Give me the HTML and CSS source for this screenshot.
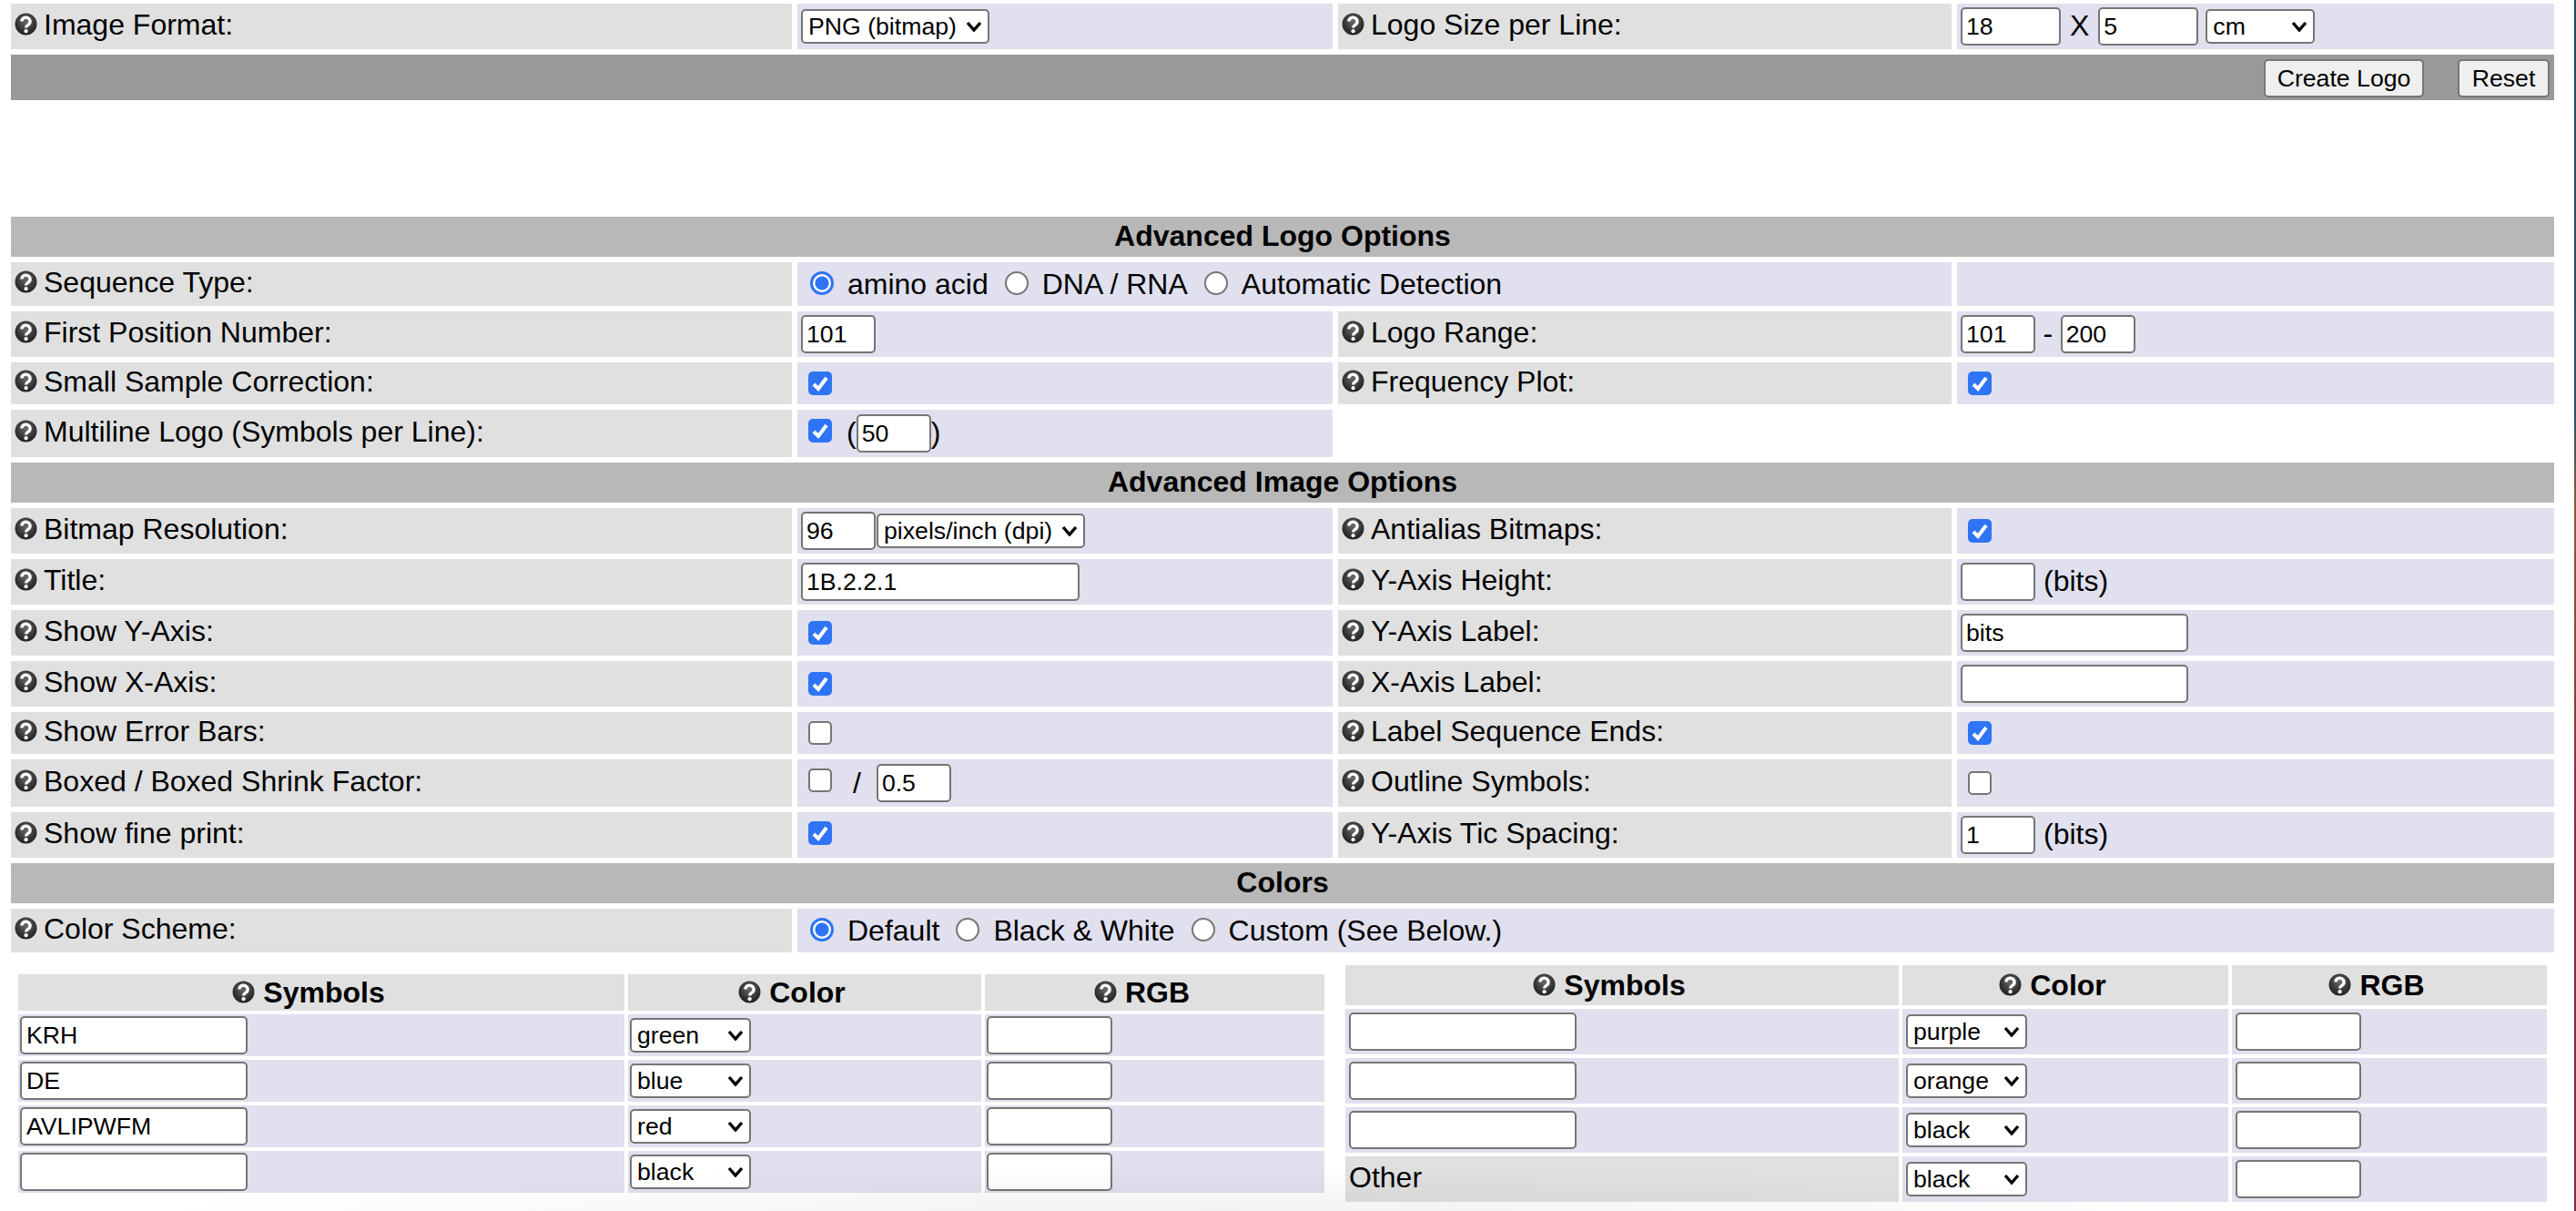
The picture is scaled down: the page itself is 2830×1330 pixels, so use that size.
FILE: index.html
```html
<!DOCTYPE html>
<html lang="en">
<head>
    <meta charset="UTF-8">
    <title>Logo Options</title>
    <link rel="stylesheet" href="styles.css">
</head>
<body>

<svg class="defs" width="0" height="0">
    <defs>
        <radialGradient id="helpFill" cx="50%" cy="38%" r="62%">
            <stop offset="0" stop-color="#6a6a6a"/>
            <stop offset="0.7" stop-color="#333"/>
            <stop offset="1" stop-color="#222"/>
        </radialGradient>
        <symbol id="help" viewBox="0 0 24 24">
            <circle cx="12" cy="12" r="11.5" fill="url(#helpFill)"/>
            <path d="M7.6 9.2a4.4 4.2 0 1 1 6.9 3.4c-1.6 1-2.4 1.6-2.4 3.2" fill="none" stroke="#fff" stroke-width="3.2"/>
            <circle cx="12.1" cy="19.4" r="2" fill="#fff"/>
        </symbol>
    </defs>
</svg>

<div class="page">
    <form class="options">
        <div class="lbl"><svg class="help"><use href="#help"/></svg>Image Format:</div>
        <div class="val">
            <select class="sel-png"><option>PNG (bitmap)</option><option>EPS (vector)</option></select>
        </div>
        <div class="lbl"><svg class="help"><use href="#help"/></svg>Logo Size per Line:</div>
        <div class="val">
            <input class="w-size" type="text" value="18">
            <span class="times">X</span>
            <input class="w-size" type="text" value="5">
            <select class="sel-cm"><option>cm</option><option>inches</option></select>
        </div>

        <div class="bar">
            <button type="button" class="btn-create">Create Logo</button>
            <button type="reset" class="btn-reset">Reset</button>
        </div>

        <div class="spacer"></div>

        <div class="head">Advanced Logo Options</div>

        <div class="lbl"><svg class="help"><use href="#help"/></svg>Sequence Type:</div>
        <div class="val span-2">
            <input type="radio" name="seqtype" checked><span class="opt">amino acid</span>
            <input type="radio" name="seqtype"><span class="opt">DNA / RNA</span>
            <input type="radio" name="seqtype"><span class="opt">Automatic Detection</span>
        </div>
        <div class="val"></div>

        <div class="lbl"><svg class="help"><use href="#help"/></svg>First Position Number:</div>
        <div class="val"><input class="w-num" type="text" value="101"></div>
        <div class="lbl"><svg class="help"><use href="#help"/></svg>Logo Range:</div>
        <div class="val">
            <input class="w-num" type="text" value="101">
            <span class="dash">-</span>
            <input class="w-num" type="text" value="200">
        </div>

        <div class="lbl"><svg class="help"><use href="#help"/></svg>Small Sample Correction:</div>
        <div class="val"><input type="checkbox" checked></div>
        <div class="lbl"><svg class="help"><use href="#help"/></svg>Frequency Plot:</div>
        <div class="val"><input type="checkbox" checked></div>

        <div class="lbl"><svg class="help"><use href="#help"/></svg>Multiline Logo (Symbols per Line):</div>
        <div class="val">
            <input class="raised" type="checkbox" checked>
            <span class="paren">(</span><input class="w-num" type="text" value="50"><span class="paren-end">)</span>
        </div>
        <div class="blank"></div>

        <div class="head">Advanced Image Options</div>

        <div class="lbl"><svg class="help"><use href="#help"/></svg>Bitmap Resolution:</div>
        <div class="val">
            <input class="w-num" type="text" value="96">
            <select class="sel-dpi"><option>pixels/inch (dpi)</option><option>pixels/cm</option></select>
        </div>
        <div class="lbl"><svg class="help"><use href="#help"/></svg>Antialias Bitmaps:</div>
        <div class="val"><input type="checkbox" checked></div>

        <div class="lbl"><svg class="help"><use href="#help"/></svg>Title:</div>
        <div class="val"><input class="w-title" type="text" value="1B.2.2.1"></div>
        <div class="lbl"><svg class="help"><use href="#help"/></svg>Y-Axis Height:</div>
        <div class="val"><input class="w-num" type="text"><span class="unit">(bits)</span></div>

        <div class="lbl"><svg class="help"><use href="#help"/></svg>Show Y-Axis:</div>
        <div class="val"><input type="checkbox" checked></div>
        <div class="lbl"><svg class="help"><use href="#help"/></svg>Y-Axis Label:</div>
        <div class="val"><input class="w-sym" type="text" value="bits"></div>

        <div class="lbl"><svg class="help"><use href="#help"/></svg>Show X-Axis:</div>
        <div class="val"><input type="checkbox" checked></div>
        <div class="lbl"><svg class="help"><use href="#help"/></svg>X-Axis Label:</div>
        <div class="val"><input class="w-sym" type="text"></div>

        <div class="lbl"><svg class="help"><use href="#help"/></svg>Show Error Bars:</div>
        <div class="val"><input type="checkbox"></div>
        <div class="lbl"><svg class="help"><use href="#help"/></svg>Label Sequence Ends:</div>
        <div class="val"><input type="checkbox" checked></div>

        <div class="lbl"><svg class="help"><use href="#help"/></svg>Boxed / Boxed Shrink Factor:</div>
        <div class="val">
            <input class="raised" type="checkbox">
            <span class="slash">/</span>
            <input class="w-num" type="text" value="0.5">
        </div>
        <div class="lbl"><svg class="help"><use href="#help"/></svg>Outline Symbols:</div>
        <div class="val"><input type="checkbox"></div>

        <div class="lbl"><svg class="help"><use href="#help"/></svg>Show fine print:</div>
        <div class="val"><input class="raised-less" type="checkbox" checked></div>
        <div class="lbl"><svg class="help"><use href="#help"/></svg>Y-Axis Tic Spacing:</div>
        <div class="val"><input class="w-num" type="text" value="1"><span class="unit">(bits)</span></div>

        <div class="head">Colors</div>

        <div class="lbl"><svg class="help"><use href="#help"/></svg>Color Scheme:</div>
        <div class="val span-3">
            <input type="radio" name="scheme" checked><span class="opt">Default</span>
            <input type="radio" name="scheme"><span class="opt">Black &amp; White</span>
            <input type="radio" name="scheme"><span class="opt">Custom (See Below.)</span>
        </div>
    </form>

    <div class="color-tables">
        <div class="colors colors-left">
            <div class="col-head"><svg class="help"><use href="#help"/></svg>Symbols</div>
            <div class="col-head"><svg class="help"><use href="#help"/></svg>Color</div>
            <div class="col-head"><svg class="help"><use href="#help"/></svg>RGB</div>

            <div class="cell"><input class="w-sym" type="text" value="KRH"></div>
            <div class="cell"><select class="sel-color"><option>green</option></select></div>
            <div class="cell"><input class="w-rgb" type="text"></div>

            <div class="cell"><input class="w-sym" type="text" value="DE"></div>
            <div class="cell"><select class="sel-color"><option>blue</option></select></div>
            <div class="cell"><input class="w-rgb" type="text"></div>

            <div class="cell"><input class="w-sym" type="text" value="AVLIPWFM"></div>
            <div class="cell"><select class="sel-color"><option>red</option></select></div>
            <div class="cell"><input class="w-rgb" type="text"></div>

            <div class="cell"><input class="w-sym" type="text"></div>
            <div class="cell"><select class="sel-color"><option>black</option></select></div>
            <div class="cell"><input class="w-rgb" type="text"></div>
        </div>

        <div class="colors colors-right">
            <div class="col-head"><svg class="help"><use href="#help"/></svg>Symbols</div>
            <div class="col-head"><svg class="help"><use href="#help"/></svg>Color</div>
            <div class="col-head"><svg class="help"><use href="#help"/></svg>RGB</div>

            <div class="cell"><input class="w-sym" type="text"></div>
            <div class="cell"><select class="sel-color"><option>purple</option></select></div>
            <div class="cell"><input class="w-rgb" type="text"></div>

            <div class="cell"><input class="w-sym" type="text"></div>
            <div class="cell"><select class="sel-color"><option>orange</option></select></div>
            <div class="cell"><input class="w-rgb" type="text"></div>

            <div class="cell"><input class="w-sym" type="text"></div>
            <div class="cell"><select class="sel-color"><option>black</option></select></div>
            <div class="cell"><input class="w-rgb" type="text"></div>

            <div class="cell other">Other</div>
            <div class="cell"><select class="sel-color"><option>black</option></select></div>
            <div class="cell"><input class="w-rgb" type="text"></div>
        </div>
    </div>
</div>

<div class="edge"></div>
<div class="window-shadow"></div>

</body>
</html>
```

FILE: styles.css
```css
body {
    margin: 0;
    height: 1330px;
    display: flex;
    overflow: hidden;
    position: relative;
    background-color: #fff;
    color: #000;
    font-family: "Liberation Sans", Arial, sans-serif;
    font-size: 32px;
}

.defs {
    position: absolute;
}

.page {
    flex: 1;
    padding: 4px 0 0 12px;
}

.edge {
    width: 2px;
    background: linear-gradient(#1d4a66 0%, #2c4f68 34%, #8a5a3a 42%, #7f2c42 70%, #7f2c42 100%);
}

/* faint shadow of the window below, laid over the bottom rows */
.window-shadow {
    position: absolute;
    left: 150px;
    right: 300px;
    bottom: 0;
    height: 50px;
    background: radial-gradient(ellipse 50% 100% at 50% 100%, rgba(0, 0, 0, 0.05), rgba(0, 0, 0, 0));
    pointer-events: none;
}

/* main options grid */
.options {
    display: grid;
    grid-template-columns: 858px 588px 674px 656px;
    grid-template-rows: 50px 50px 116px 44px 48px 50px 46px 52px 44px 50px 50px 50px 50px 46px 52px 50px 44px 48px;
    gap: 6px;
}

.lbl {
    background-color: #e0e0e0;
    display: flex;
    align-items: center;
    padding: 0 0 3px 4px;
}

.help {
    width: 25px;
    height: 25px;
    margin: 0 7px 2px 0;
    flex-shrink: 0;
    filter: blur(0.5px);
}

.val {
    background-color: #e0e0ee;
    display: flex;
    align-items: center;
    padding-left: 4px;
}

.span-2 {
    grid-column: span 2;
}

.span-3 {
    grid-column: span 3;
}

.blank {
    grid-column: span 2;
}

.bar {
    grid-column: 1 / -1;
    background-color: #999;
    display: flex;
    align-items: center;
    justify-content: flex-end;
    gap: 37px;
    padding: 2px 5px 0 0;
}

.spacer {
    grid-column: 1 / -1;
}

.head {
    grid-column: 1 / -1;
    background-color: #b8b8b8;
    font-weight: bold;
    text-align: center;
    line-height: 42px;
}

/* form controls, sized by hand */
input[type="text"], select, button {
    box-sizing: border-box;
    font-family: "Liberation Sans", Arial, sans-serif;
    font-size: 26.67px;
    color: #000;
    border: 2px solid #767676;
    border-radius: 5px;
    margin: 0;
}

input[type="text"] {
    height: 42px;
    padding: 0 4px;
    background-color: #fff;
}

select {
    appearance: none;
    height: 38px;
    padding: 0 0 0 6px;
    background: #fff url("data:image/svg+xml,%3Csvg xmlns='http://www.w3.org/2000/svg' width='18' height='12'%3E%3Cpath d='M2 2l7 8 7-8' fill='none' stroke='%23000' stroke-width='3.4'/%3E%3C/svg%3E") no-repeat right 6px center;
}

button {
    height: 42px;
    padding: 0;
    background-color: #efefef;
}

input[type="checkbox"], input[type="radio"] {
    appearance: none;
    box-sizing: border-box;
    width: 26px;
    height: 26px;
    border: 2px solid #767676;
    background-color: #fff;
    flex-shrink: 0;
}

input[type="checkbox"] {
    margin: 0 6px 0 8px;
    border-radius: 5px;
}

input[type="checkbox"]:checked {
    border-color: #2f74f6;
    background: #2f74f6 url("data:image/svg+xml,%3Csvg xmlns='http://www.w3.org/2000/svg' width='22' height='22'%3E%3Cpath d='M4 12l5 5 9-12' fill='none' stroke='%23fff' stroke-width='4'/%3E%3C/svg%3E") no-repeat center;
}

input[type="radio"] {
    margin: 0 15px 2px 10px;
    border-radius: 50%;
}

input[type="radio"]:checked {
    border: 3px solid #2f74f6;
    background: radial-gradient(circle, #2f74f6 0, #2f74f6 7px, #fff 8px);
}

.raised {
    position: relative;
    top: -3px;
}

.raised-less {
    position: relative;
    top: -2px;
}

.opt {
    margin-right: 8px;
}

.times {
    margin: 0 10px 2px;
}

.dash {
    margin: 0 8.5px 2px;
}

.paren {
    margin: 0 0 2px 10px;
}

.paren-end {
    margin-bottom: 2px;
}

.slash {
    margin: 0 17px;
}

.unit {
    margin: 0 0 2px 9px;
}

.w-num {
    width: 82px;
}

.w-size {
    width: 110px;
}

.w-title {
    width: 306px;
}

.w-sym {
    width: 250px;
}

.w-rgb {
    width: 138px;
}

.sel-png {
    width: 207px;
}

.sel-cm {
    width: 120px;
    margin-left: 8px;
}

.sel-dpi {
    width: 229px;
    margin-left: 1px;
}

.sel-color {
    width: 133px;
}

.btn-create {
    width: 176px;
}

.btn-reset {
    width: 101px;
}

/* symbol colour tables */
.color-tables {
    display: flex;
    align-items: center;
    gap: 23px;
    margin-top: 14px;
    padding-left: 8px;
}

.colors {
    display: grid;
    gap: 4px;
}

.colors-left {
    grid-template-columns: 666px 388px 373px;
    grid-template-rows: 40px 46px 46px 46px 46px;
}

.colors-right {
    grid-template-columns: 608px 358px 346px;
    grid-template-rows: 44px 50px 50px 50px 50px;
}

.col-head {
    background-color: #e0e0e0;
    font-weight: bold;
    display: flex;
    align-items: center;
    justify-content: center;
    padding-right: 28px;
}

.col-head .help {
    margin: 0 9px 2px 0;
}

.cell {
    background-color: #e0e0ee;
    display: flex;
    align-items: center;
    padding-left: 2px;
}

.cell input[type="text"] {
    padding: 0 5px;
}

.colors-right .cell {
    padding-left: 4px;
}

.colors-right .other {
    background-color: #e0e0e0;
    padding: 0 0 3px 4px;
}
```
